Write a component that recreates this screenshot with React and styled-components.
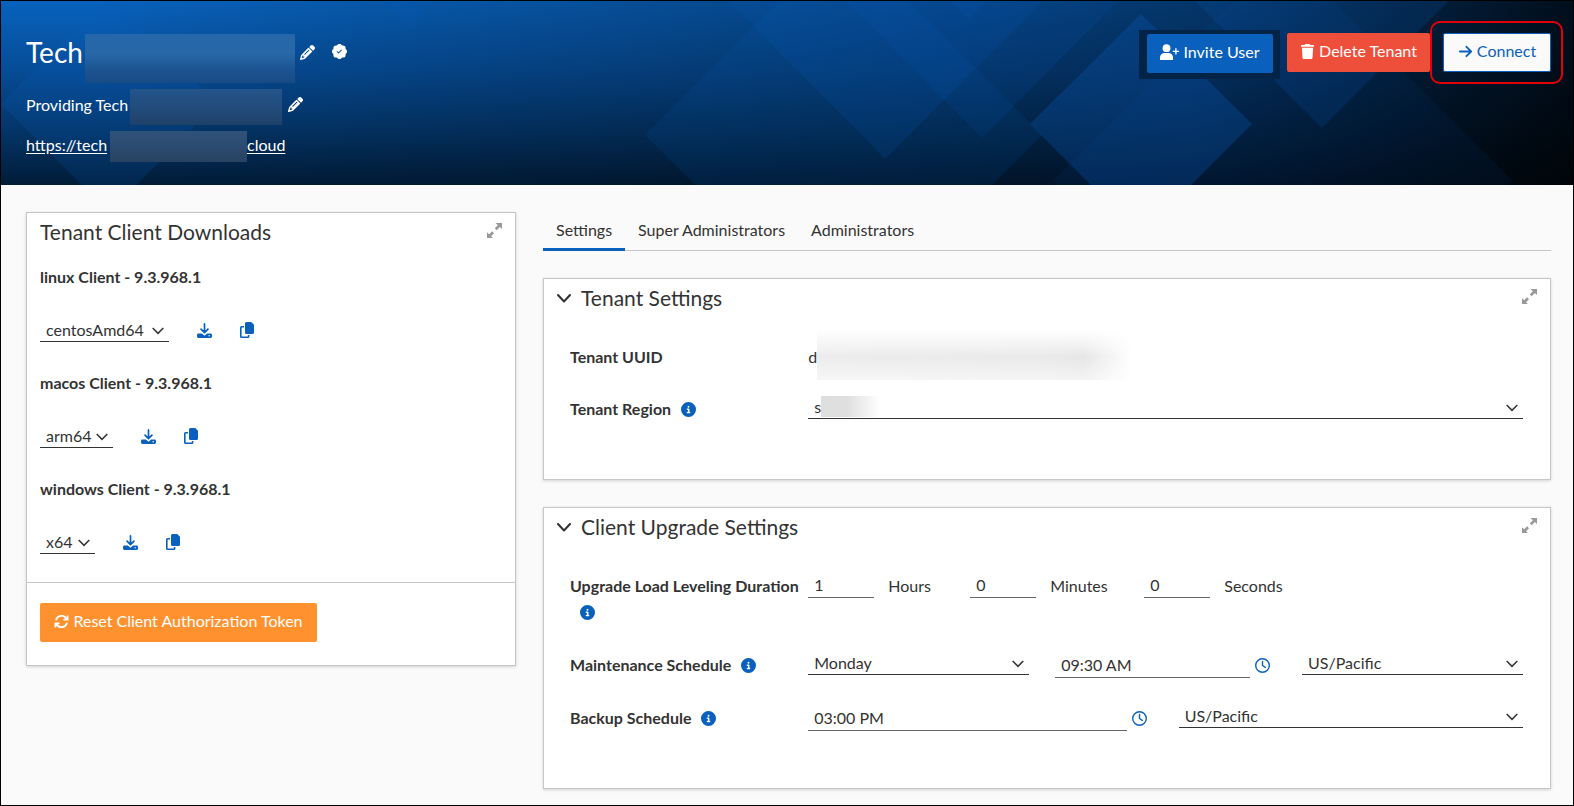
import React from "react";
import styled, { createGlobalStyle, css } from "styled-components";
import {
  FaPencil,
  FaTrash,
  FaArrowRight,
  FaArrowsRotate,
  FaCircleInfo,
  FaRegClock,
} from "react-icons/fa6";
import { BsPatchCheckFill } from "react-icons/bs";

const blue = "#0a60bd";
const ink = "#333";

const GlobalStyle = createGlobalStyle`
  *, *::before, *::after { box-sizing: border-box; }
  body {
    margin: 0;
    background: #fafafa;
    color: ${ink};
    font-family: Lato, "Open Sans", sans-serif;
    font-size: 16px;
    line-height: 24px;
  }
  button, input, select { font: inherit; color: inherit; }
  svg { display: block; flex: none; }
`;

const Page = styled.div`
  min-height: 100vh;
  border: 1px solid #000;
`;

/* Header */

const Banner = styled.header`
  position: relative;
  display: flex;
  justify-content: space-between;
  align-items: flex-start;
  min-height: 184px;
  padding: 20px 10px 20px 25px;
  overflow: hidden;
  color: #fff;
  background:
    linear-gradient(to right, rgba(0, 4, 12, 0) 5%, rgba(0, 6, 16, 0.22) 41%, rgba(0, 6, 16, 0.48) 76%, rgba(0, 0, 0, 0.85) 100%),
    linear-gradient(to bottom, #0862bd 0%, #064c96 38%, #033568 70%, #011c38 100%);
`;

const Pattern = styled.svg`
  position: absolute;
  inset: 0;
  width: 100%;
  height: 100%;
`;

const Identity = styled.div`
  position: relative;
  display: flex;
  flex-direction: column;
  gap: 6px;
  padding-top: 13px;
`;

const IdentityRow = styled.div`
  display: flex;
  align-items: flex-start;
  line-height: ${(p) => p.$line}px;
`;

const Title = styled.h1`
  margin: 0;
  width: 59px;
  font-size: 28px;
  line-height: inherit;
  font-weight: 400;
`;

const Tagline = styled.span`
  width: 104px;
`;

const SiteLink = styled.a`
  display: flex;
  color: #fff;
  text-decoration: underline;
  text-underline-offset: 2px;
`;

const LinkStart = styled.span`
  width: 84px;
`;

const Masked = styled.span`
  width: ${(p) => p.$w}px;
  height: ${(p) => p.$h}px;
  background: ${(p) => p.$bg};
`;

const IconButton = styled.button`
  display: flex;
  align-items: center;
  justify-content: center;
  padding: 0;
  border: 0;
  background: none;
  color: ${(p) => p.$color || "inherit"};
  height: ${(p) => p.$h || 16}px;
  margin-left: ${(p) => p.$gap || 0}px;
  cursor: pointer;
`;

const Actions = styled.div`
  position: relative;
  display: flex;
  align-items: center;
`;

const InviteBackdrop = styled.div`
  margin: 4px 7px 0 0;
  padding: 4px 7px 6px 8px;
  background: #032347;
`;

const Callout = styled.div`
  padding: 10px 10px 10px 11px;
  border: 2px solid #e30008;
  border-radius: 10px;
`;

const tones = {
  primary: css`background: ${blue}; color: #fff;`,
  danger: css`background: #ee4f3b; color: #fff;`,
  warning: css`background: #ff922e; color: #fff;`,
  outline: css`background: #fafafa; color: ${blue}; border-color: ${blue};`,
};

const Button = styled.button`
  display: flex;
  align-items: center;
  justify-content: center;
  gap: 4px;
  height: 39px;
  padding: 0 13px 3px;
  border: 1px solid transparent;
  border-radius: 2px;
  white-space: nowrap;
  cursor: pointer;
  width: ${(p) => p.$w}px;
  ${(p) => tones[p.$tone]}
`;

/* Body */

const Content = styled.main`
  display: grid;
  grid-template-columns: minmax(0, 490fr) minmax(0, 1008fr);
  align-items: start;
  gap: 27px;
  padding: 27px 22px 15px 25px;
`;

const Card = styled.section`
  position: relative;
  background: #fff;
  border: 1px solid #c6c6c6;
  box-shadow: 0 1px 3px rgba(0, 0, 0, 0.16);
`;

const CardHead = styled.div`
  display: flex;
  align-items: flex-start;
  padding: 7px 13px 0;
`;

const CardTitle = styled.h2`
  flex: 1;
  margin: 0;
  font-size: 21px;
  line-height: 24px;
  font-weight: 400;
`;

const Collapse = styled(IconButton)`
  width: 14px;
  height: 24px;
  margin-right: 10px;
`;

const Expand = styled(IconButton)`
  height: 20px;
  color: #999;
`;

const Clients = styled.div`
  padding: 21px 13px 19px;
`;

const Client = styled.div`
  height: 106px;

  &:last-child { height: 86px; }
`;

const ClientName = styled.label`
  display: block;
  font-weight: 700;
  margin-bottom: 29px;
`;

const ClientRow = styled.div`
  display: flex;
  align-items: center;
`;

const CardFoot = styled.div`
  padding: 20px 13px 23px;
  border-top: 1px solid #c6c6c6;
`;

const SelectBox = styled.span`
  position: relative;
  display: block;
  align-self: start;
  width: ${(p) => (p.$w ? p.$w + "px" : "100%")};
  border-bottom: 1px solid ${ink};
`;

const SelectControl = styled.select`
  display: block;
  width: 100%;
  height: 23px;
  padding: 0 20px 1px 6px;
  border: 0;
  border-radius: 0;
  background: transparent;
  appearance: none;
  outline: 0;
`;

const SelectMark = styled.svg`
  position: absolute;
  right: 5px;
  top: 7px;
  pointer-events: none;
`;

const Main = styled.div`
  display: flex;
  flex-direction: column;
  gap: 27px;
`;

const Tabs = styled.div`
  display: flex;
  border-bottom: 1px solid #c6c6c6;
`;

const Tab = styled.button`
  height: 39px;
  margin-bottom: -1px;
  padding: 0 13px;
  border: 0;
  border-bottom: 3px solid ${(p) => (p.$active ? blue : "transparent")};
  background: none;
  cursor: pointer;
`;

const Form = styled.div`
  display: flex;
  flex-direction: column;
  gap: ${(p) => p.$gap}px;
  padding: 34px 27px 57px 26px;
`;

const Field = styled.div`
  display: grid;
  grid-template-columns: minmax(0, 1fr) minmax(0, 3fr);
  align-items: start;

  & > ${SelectBox}, & ${SelectBox} { margin-top: -1px; }
`;

const FieldLabel = styled.div`
  display: flex;
  flex-wrap: wrap;
  align-items: center;
  line-height: 26px;
  font-weight: 700;
`;

const Info = styled(IconButton)`
  height: 26px;
  margin-left: 10px;
  color: ${blue};
`;

const Columns = styled.div`
  display: grid;
  grid-template-columns: repeat(${(p) => p.$n}, minmax(0, 1fr));
  gap: 26px;
`;

const MaskedValue = styled.div`
  display: flex;
  line-height: 26px;
`;

const UuidMask = styled.span`
  width: 314px;
  height: 50px;
  margin: -14px 0 -24px;
  background:
    linear-gradient(to bottom, #fff 0%, rgba(255, 255, 255, 0.5) 28%, rgba(255, 255, 255, 0) 54%, rgba(255, 255, 255, 0.55) 100%),
    linear-gradient(to right, #ececec 0%, #eaeaea 70%, #e6e6e6 85%, #fff 100%);
`;

const RegionMask = styled.span`
  position: absolute;
  left: 13px;
  bottom: 1px;
  width: 66px;
  height: 21px;
  background: linear-gradient(to right, #dedede 0%, #dfdfdf 40%, #fff 90%);
`;

const TextInput = styled.input`
  display: block;
  min-width: 0;
  width: ${(p) => (p.$w ? p.$w + "px" : "100%")};
  height: ${(p) => p.$h || 26}px;
  padding: 0 6px;
  border: 0;
  border-bottom: 1px solid #666;
  border-radius: 0;
  background: transparent;
  outline: 0;
`;

const TimeBox = styled.div`
  display: flex;
  align-items: center;
  gap: 5px;
  padding-right: 6px;
`;

const Durations = styled.div`
  display: grid;
  grid-template-columns: 162px 174px auto;
`;

const Duration = styled.label`
  display: flex;
  gap: 14px;
  line-height: 26px;
`;

/* Icons */

const Chevron = () => (
  <svg width="14" height="14" viewBox="0 0 14 14" fill="none" stroke="currentColor" strokeWidth="2" strokeLinecap="round" strokeLinejoin="round">
    <path d="M1 4l6 6.500L13 4" />
  </svg>
);

const ExpandIcon = () => (
  <svg width="15" height="15" viewBox="0 0 16 16" fill="currentColor">
    <path d="M9 0h7v6.500l-2.300-2.200-3.400 3.400-2-2 3.400-3.400zM0 16v-6.200l2.300 2.200 3.200-3.200 2 2-3.200 3.200 1.900 2z" />
  </svg>
);

const DownloadIcon = () => (
  <svg width="15" height="15" viewBox="0 0 16 16" fill="none" stroke={blue}>
    <path d="M8 1v9M4.300 6.500 8 10.200l3.700-3.700" strokeWidth="1.800" strokeLinecap="round" strokeLinejoin="round" />
    <path fill={blue} stroke="none" d="M1.500 11.200h3.700L8 13.600l2.800-2.400h3.700A1.500 1.500 0 0 1 16 12.700v1.800a1.500 1.500 0 0 1-1.500 1.500h-13A1.500 1.500 0 0 1 0 14.500v-1.800a1.500 1.500 0 0 1 1.500-1.500zm11.500 1.600a.8.800 0 1 0 0 1.600.8.800 0 0 0 0-1.600z" />
  </svg>
);

const CopyIcon = () => (
  <svg width="14" height="16" viewBox="0 0 14 16" fill={blue}>
    <path d="M6.500 0h4.700L14 2.800v7.700a1.500 1.500 0 0 1-1.500 1.500h-6A1.500 1.500 0 0 1 5 10.500v-9A1.500 1.500 0 0 1 6.500 0z" />
    <path d="M4 4v1.600H1.600v8.800h6.200V13h1.600v1.500A1.500 1.500 0 0 1 7.900 16H1.500A1.500 1.500 0 0 1 0 14.500v-9A1.500 1.500 0 0 1 1.500 4z" />
  </svg>
);

const InviteIcon = () => (
  <svg width="19" height="16" viewBox="0 0 19 16" fill="currentColor">
    <circle cx="6.500" cy="4.200" r="3.900" />
    <path d="M0 16v-2.500A4.500 4.500 0 0 1 4.500 9h4a4.500 4.500 0 0 1 4.500 4.500V16z" />
    <path d="M15.200 4.300h1.400v2.400H19v1.400h-2.400v2.400h-1.400V8.100h-2.400V6.700h2.400z" />
  </svg>
);

function Select({ label, id, value, width, mask }) {
  return (
    <SelectBox $w={width}>
      <SelectControl id={id} aria-label={label} defaultValue={value}>
        <option>{value}</option>
      </SelectControl>
      {mask && <RegionMask />}
      <SelectMark width="12" height="12" viewBox="0 0 12 12" fill="none" stroke="currentColor" strokeWidth="1.500">
        <path d="M.7 3 6 8.400 11.300 3" />
      </SelectMark>
    </SelectBox>
  );
}

function Time({ label, value }) {
  return (
    <TimeBox>
      <TextInput aria-label={label} defaultValue={value} $h={26} />
      <IconButton aria-label={"Pick " + label} $color={blue}>
        <FaRegClock size={15} />
      </IconButton>
    </TimeBox>
  );
}

function Label({ text, info }) {
  return (
    <FieldLabel>
      {text}
      {info && (
        <Info aria-label={"About " + text}>
          <FaCircleInfo size={15} />
        </Info>
      )}
    </FieldLabel>
  );
}

function CardHeader({ title, collapsible }) {
  return (
    <CardHead>
      {collapsible && (
        <Collapse aria-label={"Collapse " + title}>
          <Chevron />
        </Collapse>
      )}
      <CardTitle>{title}</CardTitle>
      <Expand aria-label={"Expand " + title}>
        <ExpandIcon />
      </Expand>
    </CardHead>
  );
}

const clients = [
  { os: "linux", arch: "centosAmd64", width: 129 },
  { os: "macos", arch: "arm64", width: 73 },
  { os: "windows", arch: "x64", width: 55 },
];

export default function App() {
  return (
    <Page>
      <GlobalStyle />
      <Banner>
        <Pattern viewBox="0 0 1572 184" preserveAspectRatio="xMidYMin slice" aria-hidden="true">
          <g fill="#0a5fc0">
            <path d="M0 103 108-5l108 108-108 108z" fillOpacity=".17" />
            <path d="M385 0h48l-24 27z" fillOpacity=".15" />
            <path d="M644 134 843-65l198 199-198 199z" fillOpacity=".12" />
            <path d="M727 0h315L884 158z" fillOpacity=".15" />
            <path d="M845 0h272L981 137z" fillOpacity=".13" />
            <path d="M950 0h36l-18 18z" fillOpacity=".15" />
            <path d="m1029 123 111-110 111 110-111 111z" fillOpacity=".28" />
            <path d="m1052 180 230-230 230 230-230 230z" fillOpacity=".08" />
            <path d="M1194 0h254l-127 127z" fillOpacity=".17" />
          </g>
        </Pattern>
        <Identity>
          <IdentityRow $line={36}>
            <Title>Tech</Title>
            <Masked $w={210} $h={49} $bg="linear-gradient(#2567aa, #2868a8 40%, #1b5290 75%, #174b86)" />
            <IconButton aria-label="Edit name" $gap={5} $h={36}>
              <FaPencil size={15} />
            </IconButton>
            <IconButton aria-label="Verified" $gap={17} $h={35}>
              <BsPatchCheckFill size={15} />
            </IconButton>
          </IdentityRow>
          <IdentityRow $line={32}>
            <Tagline>Providing Tech</Tagline>
            <Masked $w={152} $h={36} $bg="linear-gradient(#23548a, #224c7c 50%, #1f4169)" />
            <IconButton aria-label="Edit description" $gap={6} $h={31}>
              <FaPencil size={15} />
            </IconButton>
          </IdentityRow>
          <IdentityRow $line={28}>
            <SiteLink href="#">
              <LinkStart>https://tech</LinkStart>
              <Masked $w={137} $h={31} $bg="linear-gradient(#2f527b, #2c4b70 50%, #284260)" />
              cloud
            </SiteLink>
          </IdentityRow>
        </Identity>
        <Actions>
          <InviteBackdrop>
            <Button $tone="primary" $w={126}>
              <InviteIcon />
              Invite User
            </Button>
          </InviteBackdrop>
          <Button $tone="danger" $w={143}>
            <FaTrash size={15} />
            Delete Tenant
          </Button>
          <Callout>
            <Button $tone="outline" $w={108}>
              <FaArrowRight size={15} />
              Connect
            </Button>
          </Callout>
        </Actions>
      </Banner>

      <Content>
        <Card>
          <CardHeader title="Tenant Client Downloads" />
          <Clients>
            {clients.map((c) => (
              <Client key={c.os}>
                <ClientName htmlFor={c.os}>{c.os} Client - 9.3.968.1</ClientName>
                <ClientRow>
                  <Select id={c.os} value={c.arch} width={c.width} />
                  <IconButton aria-label={"Download " + c.os + " client"} $gap={28}>
                    <DownloadIcon />
                  </IconButton>
                  <IconButton aria-label={"Copy " + c.os + " link"} $gap={28}>
                    <CopyIcon />
                  </IconButton>
                </ClientRow>
              </Client>
            ))}
          </Clients>
          <CardFoot>
            <Button $tone="warning" $w={277}>
              <FaArrowsRotate size={15} />
              Reset Client Authorization Token
            </Button>
          </CardFoot>
        </Card>

        <Main>
          <Tabs role="tablist">
            <Tab role="tab" aria-selected="true" $active>Settings</Tab>
            <Tab role="tab" aria-selected="false">Super Administrators</Tab>
            <Tab role="tab" aria-selected="false">Administrators</Tab>
          </Tabs>

          <Card>
            <CardHeader title="Tenant Settings" collapsible />
            <Form $gap={26}>
              <Field>
                <Label text="Tenant UUID" />
                <MaskedValue>
                  d
                  <UuidMask />
                </MaskedValue>
              </Field>
              <Field>
                <Label text="Tenant Region" info />
                <Select label="Tenant Region" value="s" mask />
              </Field>
            </Form>
          </Card>

          <Card>
            <CardHeader title="Client Upgrade Settings" collapsible />
            <Form $gap={27}>
              <Field>
                <Label text="Upgrade Load Leveling Duration" info />
                <Durations>
                  <Duration><TextInput $w={66} $h={25} defaultValue="1" />Hours</Duration>
                  <Duration><TextInput $w={66} $h={25} defaultValue="0" />Minutes</Duration>
                  <Duration><TextInput $w={66} $h={25} defaultValue="0" />Seconds</Duration>
                </Durations>
              </Field>
              <Field>
                <Label text="Maintenance Schedule" info />
                <Columns $n={3}>
                  <Select label="Maintenance day" value="Monday" />
                  <Time label="maintenance time" value="09:30 AM" />
                  <Select label="Maintenance time zone" value="US/Pacific" />
                </Columns>
              </Field>
              <Field>
                <Label text="Backup Schedule" info />
                <Columns $n={2}>
                  <Time label="backup time" value="03:00 PM" />
                  <Select label="Backup time zone" value="US/Pacific" />
                </Columns>
              </Field>
            </Form>
          </Card>
        </Main>
      </Content>
    </Page>
  );
}
